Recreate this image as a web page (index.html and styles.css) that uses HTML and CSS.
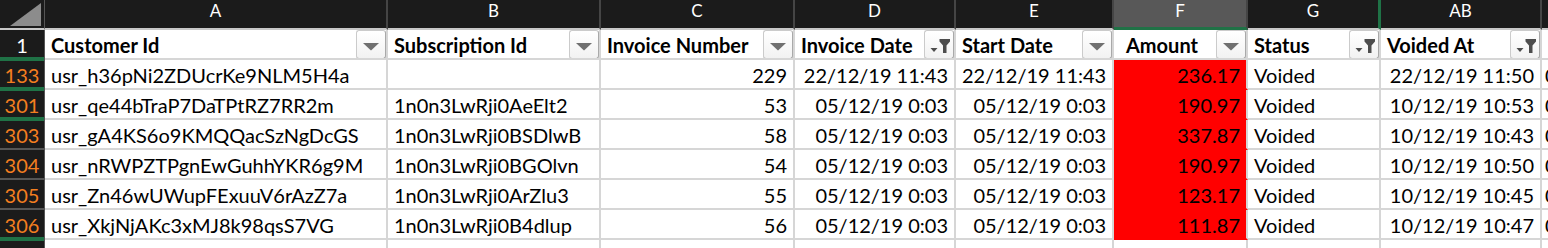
FILE: index.html
```html
<!DOCTYPE html>
<html>
<head>
<meta charset="utf-8">
<link rel="stylesheet" href="styles.css">
</head>
<body>
<div class="sheet">
  <!-- column headers -->
  <div class="corner"><svg width="44" height="30" viewBox="0 0 44 30"><polygon points="10,26 41,26 41,3" fill="#8c8c8c"/></svg></div>
  <div class="colhdr">A</div>
  <div class="colhdr">B</div>
  <div class="colhdr">C</div>
  <div class="colhdr">D</div>
  <div class="colhdr">E</div>
  <div class="colhdr selected">F</div>
  <div class="colhdr hidden-after">G</div>
  <div class="colhdr">AB</div>
  <div class="colhdr"></div>

  <!-- row 1 -->
  <div class="rowhdr first hidden-below">1</div>
  <div class="cell head"><span class="txt">Customer Id</span><span class="btn"><svg width="28" height="27" viewBox="0 0 28 27"><polygon points="6,12 22,12 14,19.5" fill="#707070"/></svg></span></div>
  <div class="cell head"><span class="txt">Subscription Id</span><span class="btn"><svg width="28" height="27" viewBox="0 0 28 27"><polygon points="6,12 22,12 14,19.5" fill="#707070"/></svg></span></div>
  <div class="cell head"><span class="txt">Invoice Number</span><span class="btn"><svg width="28" height="27" viewBox="0 0 28 27"><polygon points="6,12 22,12 14,19.5" fill="#707070"/></svg></span></div>
  <div class="cell head"><span class="txt">Invoice Date</span><span class="btn"><svg width="28" height="27" viewBox="0 0 28 27"><polygon points="5.5,17 12.5,17 9,21" fill="#4d4d4d"/><path d="M14.5 8 H25 V10.5 L21.5 14.5 V22 H18 V14.5 L14.5 10.5 Z" fill="#4d4d4d"/></svg></span></div>
  <div class="cell head"><span class="txt">Start Date</span><span class="btn"><svg width="28" height="27" viewBox="0 0 28 27"><polygon points="6,12 22,12 14,19.5" fill="#707070"/></svg></span></div>
  <div class="cell head"><span class="txt amt">Amount</span><span class="btn"><svg width="28" height="27" viewBox="0 0 28 27"><polygon points="6,12 22,12 14,19.5" fill="#707070"/></svg></span></div>
  <div class="cell head"><span class="txt">Status</span><span class="btn"><svg width="28" height="27" viewBox="0 0 28 27"><polygon points="5.5,17 12.5,17 9,21" fill="#4d4d4d"/><path d="M14.5 8 H25 V10.5 L21.5 14.5 V22 H18 V14.5 L14.5 10.5 Z" fill="#4d4d4d"/></svg></span></div>
  <div class="cell head"><span class="txt">Voided At</span><span class="btn"><svg width="28" height="27" viewBox="0 0 28 27"><polygon points="5.5,17 12.5,17 9,21" fill="#4d4d4d"/><path d="M14.5 8 H25 V10.5 L21.5 14.5 V22 H18 V14.5 L14.5 10.5 Z" fill="#4d4d4d"/></svg></span></div>
  <div class="cell head clip"><span class="txt">Created At</span></div>

  <!-- 133 -->
  <div class="rowhdr hidden-below">133</div>
  <div class="cell">usr_h36pNi2ZDUcrKe9NLM5H4a</div>
  <div class="cell"></div>
  <div class="cell num">229</div>
  <div class="cell num">22/12/19 11:43</div>
  <div class="cell num">22/12/19 11:43</div>
  <div class="cell num red">236.17</div>
  <div class="cell">Voided</div>
  <div class="cell num">22/12/19 11:50</div>
  <div class="cell clip">0</div>

  <!-- 301 -->
  <div class="rowhdr hidden-below">301</div>
  <div class="cell">usr_qe44bTraP7DaTPtRZ7RR2m</div>
  <div class="cell">1n0n3LwRji0AeElt2</div>
  <div class="cell num">53</div>
  <div class="cell num">05/12/19 0:03</div>
  <div class="cell num">05/12/19 0:03</div>
  <div class="cell num red">190.97</div>
  <div class="cell">Voided</div>
  <div class="cell num">10/12/19 10:53</div>
  <div class="cell clip">0</div>

  <!-- 303 -->
  <div class="rowhdr">303</div>
  <div class="cell">usr_gA4KS6o9KMQQacSzNgDcGS</div>
  <div class="cell">1n0n3LwRji0BSDlwB</div>
  <div class="cell num">58</div>
  <div class="cell num">05/12/19 0:03</div>
  <div class="cell num">05/12/19 0:03</div>
  <div class="cell num red">337.87</div>
  <div class="cell">Voided</div>
  <div class="cell num">10/12/19 10:43</div>
  <div class="cell clip">0</div>

  <!-- 304 -->
  <div class="rowhdr">304</div>
  <div class="cell">usr_nRWPZTPgnEwGuhhYKR6g9M</div>
  <div class="cell">1n0n3LwRji0BGOlvn</div>
  <div class="cell num">54</div>
  <div class="cell num">05/12/19 0:03</div>
  <div class="cell num">05/12/19 0:03</div>
  <div class="cell num red">190.97</div>
  <div class="cell">Voided</div>
  <div class="cell num">10/12/19 10:50</div>
  <div class="cell clip">0</div>

  <!-- 305 -->
  <div class="rowhdr">305</div>
  <div class="cell">usr_Zn46wUWupFExuuV6rAzZ7a</div>
  <div class="cell">1n0n3LwRji0ArZlu3</div>
  <div class="cell num">55</div>
  <div class="cell num">05/12/19 0:03</div>
  <div class="cell num">05/12/19 0:03</div>
  <div class="cell num red">123.17</div>
  <div class="cell">Voided</div>
  <div class="cell num">10/12/19 10:45</div>
  <div class="cell clip">0</div>

  <!-- 306 -->
  <div class="rowhdr hidden-below">306</div>
  <div class="cell">usr_XkjNjAKc3xMJ8k98qsS7VG</div>
  <div class="cell">1n0n3LwRji0B4dlup</div>
  <div class="cell num">56</div>
  <div class="cell num">05/12/19 0:03</div>
  <div class="cell num">05/12/19 0:03</div>
  <div class="cell num red">111.87</div>
  <div class="cell">Voided</div>
  <div class="cell num">10/12/19 10:47</div>
  <div class="cell clip">0</div>

  <!-- partial row -->
  <div class="rowhdr"></div>
  <div class="cell"></div>
  <div class="cell"></div>
  <div class="cell"></div>
  <div class="cell"></div>
  <div class="cell"></div>
  <div class="cell"></div>
  <div class="cell"></div>
  <div class="cell"></div>
  <div class="cell"></div>
</div>
</body>
</html>
```

FILE: styles.css
```css
html, body {
  margin: 0;
  padding: 0;
  background: #ffffff;
  overflow: hidden;
}

.sheet {
  width: 1548px;
  height: 248px;
  overflow: hidden;
  display: grid;
  grid-template-columns: 45px 343px 213px 194px 161px 158px 134px 133px 161px 100px;
  grid-template-rows: repeat(9, 30px);
  font-family: "Lato", "Open Sans", sans-serif;
  font-size: 20px;
  color: #000;
}

.sheet > div {
  box-sizing: border-box;
  white-space: nowrap;
  overflow: hidden;
}

.corner {
  background: #1b1b1b;
  border-right: 1px solid #555;
  border-bottom: 2px solid #c8c8c8;
}
.corner svg { display: block; }

.colhdr {
  background: #1b1b1b;
  color: #fff;
  font-size: 17px;
  line-height: 21px;
  text-align: center;
  border-right: 2px solid #454545;
  border-bottom: 2px solid #c8c8c8;
}
.colhdr.selected {
  background: #585858;
  border-bottom: 3px solid #1f7246;
}
.colhdr.hidden-after {
  border-right: 3px solid #1f7246;
}

.rowhdr {
  position: relative;
  overflow: visible !important;
  background: #1b1b1b;
  color: #f47f20;
  text-align: center;
  padding-top: 3px;
  line-height: 25px;
  border-right: 1px solid #555;
  border-bottom: 2px solid #555;
}
.rowhdr.first { color: #fff; }
.rowhdr.hidden-below::after {
  content: "";
  position: absolute;
  left: 0;
  right: 0;
  bottom: -3px;
  height: 4px;
  background: #1f7246;
  z-index: 1;
}

.cell {
  background: #fff;
  border-right: 2px solid #d6d6d6;
  border-bottom: 2px solid #d6d6d6;
  padding: 3px 6px 0 6px;
  line-height: 25px;
}
.cell.num { text-align: right; }
.cell.red {
  background: #ff0000;
  border-bottom-color: #ff0000;
}
.cell.clip { padding-left: 3px; }

.cell.head {
  display: flex;
  justify-content: space-between;
  align-items: flex-start;
  padding: 0;
  font-weight: bold;
}
.cell.head .txt {
  padding: 3px 0 0 6px;
  line-height: 25px;
}
.cell.head .txt.amt { padding-left: 12px; }

.btn {
  box-sizing: border-box;
  flex: none;
  width: 30px;
  height: 29px;
  margin-top: 0;
  border: 1px solid #cbcbcb;
  border-right-color: #a9a9a9;
  border-bottom-color: #a9a9a9;
  border-radius: 3px;
  background: linear-gradient(#ffffff, #f2f2f2);
}
.btn svg { display: block; }
```
